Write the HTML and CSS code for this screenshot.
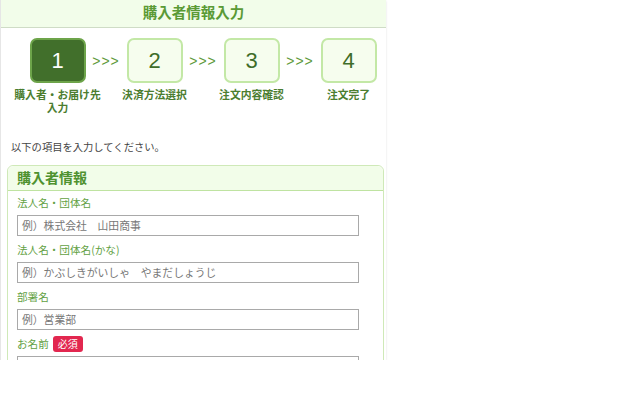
FILE: index.html
```html
<!DOCTYPE html>
<html lang="ja">
<head>
<meta charset="utf-8">
<title>購入者情報入力</title>
<link rel="stylesheet" href="styles.css">
</head>
<body>
<div class="page">
  <header class="top">購入者情報入力</header>
  <div class="steps">
    <div class="step">
      <div class="box active">1</div>
      <div class="label">購入者・お届け先<br>入力</div>
    </div>
    <div class="arrow"><span>&gt;&gt;&gt;</span></div>
    <div class="step">
      <div class="box">2</div>
      <div class="label">決済方法選択</div>
    </div>
    <div class="arrow"><span>&gt;&gt;&gt;</span></div>
    <div class="step">
      <div class="box">3</div>
      <div class="label">注文内容確認</div>
    </div>
    <div class="arrow"><span>&gt;&gt;&gt;</span></div>
    <div class="step">
      <div class="box">4</div>
      <div class="label">注文完了</div>
    </div>
  </div>
  <p class="intro">以下の項目を入力してください。</p>
  <section class="card">
    <h2 class="card-head">購入者情報</h2>
    <div class="card-body">
      <div class="field-label">法人名・団体名</div>
      <div class="input">例）株式会社　山田商事</div>
      <div class="field-label">法人名・団体名(かな)</div>
      <div class="input">例）かぶしきがいしゃ　やまだしょうじ</div>
      <div class="field-label">部署名</div>
      <div class="input">例）営業部</div>
      <div class="field-label">お名前 <span class="req">必須</span></div>
      <div class="input"></div>
    </div>
  </section>
</div>
</body>
</html>
```
FILE: styles.css
```css
html, body {
  margin: 0;
  padding: 0;
  background: #fff;
}
body {
  font-family: "Noto Sans CJK JP", "Noto Sans", sans-serif;
}
.page {
  width: 386px;
  height: 360px;
  overflow: hidden;
  background: #fff;
  box-shadow: 0 1px 2px rgba(0,0,0,0.12);
  border-left: 1px solid #e6e6e6;
  box-sizing: border-box;
}
.top {
  height: 28px;
  box-sizing: border-box;
  border-bottom: 1px solid #cfdcc6;
  background: #f2fdea;
  color: #5a9a35;
  font-weight: bold;
  font-size: 14.5px;
  line-height: 23px;
  text-align: center;
}
.steps {
  display: flex;
  padding-left: 8px;
  margin-top: 10px;
}
.step {
  width: 97px;
  flex-shrink: 0;
  display: flex;
  flex-direction: column;
  align-items: center;
}
.box {
  width: 56px;
  height: 45px;
  box-sizing: border-box;
  border: 2px solid #c3e8a6;
  border-radius: 7px;
  background: #f6fdee;
  color: #3f6d29;
  font-family: "Liberation Sans", Arial, sans-serif;
  font-size: 22px;
  line-height: 41px;
  text-align: center;
}
.box.active {
  background: #416f2b;
  border-color: #6da44a;
  color: #fff;
}
.label {
  margin-top: 5px;
  color: #4b7d30;
  font-weight: bold;
  font-size: 10.8px;
  line-height: 12.5px;
  text-align: center;
  white-space: nowrap;
}
.arrow {
  width: 0;
  flex-shrink: 0;
  height: 45px;
  display: flex;
  justify-content: center;
  align-items: center;
}
.arrow span {
  color: #5e9a3b;
  font-family: "Liberation Sans", Arial, sans-serif;
  font-size: 14px;
  letter-spacing: 1px;
  white-space: nowrap;
}
.intro {
  margin: 26px 0 0 10px;
  color: #444;
  font-size: 10.3px;
  line-height: 16px;
}
.card {
  margin: 10px 0 0 6px;
  width: 377px;
  border: 1px solid #cfe9b8;
  border-radius: 6px 6px 0 0;
  box-sizing: border-box;
}
.card-head {
  margin: 0;
  height: 25px;
  box-sizing: border-box;
  padding-left: 9px;
  background: #f2fde9;
  border-bottom: 1px solid #bfe3a1;
  border-radius: 6px 6px 0 0;
  color: #4f9230;
  font-size: 14px;
  font-weight: bold;
  line-height: 22px;
}
.card-body {
  padding: 3px 0 0 9px;
}
.field-label {
  color: #62a143;
  font-size: 10.6px;
  line-height: 17px;
  margin-bottom: 4px;
  display: flex;
  align-items: center;
  gap: 4px;
}
.req {
  display: inline-block;
  background: #e2274f;
  color: #fff;
  font-size: 10px;
  line-height: 16px;
  padding: 0 5px;
  border-radius: 3px;
}
.input {
  width: 342px;
  height: 21px;
  box-sizing: border-box;
  border: 1px solid #a9a9a9;
  padding-left: 4px;
  color: #777;
  font-size: 10.8px;
  line-height: 19px;
  margin-bottom: 5px;
  white-space: nowrap;
}
```
